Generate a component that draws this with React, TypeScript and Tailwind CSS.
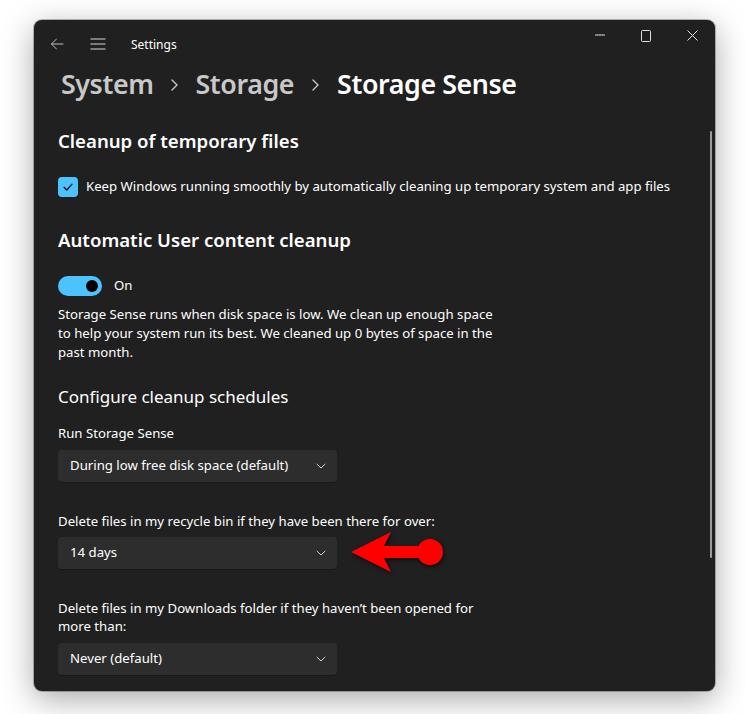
import React from "react";

function Chevron() {
  return (
    <svg width="12" height="12" viewBox="0 0 12 12" fill="none">
      <path d="M2 4.2 L6 8 L10 4.2" stroke="#d0d0d0" strokeWidth="1" strokeLinecap="round" strokeLinejoin="round" />
    </svg>
  );
}

function Dropdown({ label }: { label: string }) {
  return (
    <div className="flex h-[32px] w-[279px] items-center justify-between rounded-[4px] bg-[#2d2d2d] pl-[12px] pr-[10px] shadow-[0_1px_0_rgba(0,0,0,0.25)]">
      <span className="text-[13.2px] text-white">{label}</span>
      <Chevron />
    </div>
  );
}

export default function App() {
  return (
    <div
      className="h-[714px] w-[745px] overflow-hidden bg-white pl-[34px] pt-[20px]"
      style={{ fontFamily: '"Noto Sans", "Open Sans", sans-serif' }}
    >
      <div className="relative flex h-[671px] w-[681px] flex-col overflow-hidden rounded-[8px] bg-[#202020] shadow-[0_8px_32px_rgba(0,0,0,0.35),0_0_0_1px_rgba(0,0,0,0.25)]">
        {/* Title bar */}
        <div className="flex h-[44px] items-start justify-between">
          <div className="flex h-[48px] items-center pl-[16px]">
            <svg width="14" height="14" viewBox="0 0 14 14" fill="none">
              <path d="M13 7 H1.5 M6.5 2 L1.5 7 L6.5 12" stroke="#bdbdbd" strokeWidth="1" strokeLinecap="round" strokeLinejoin="round" />
            </svg>
            <svg className="ml-[26px]" width="16" height="12" viewBox="0 0 16 12" fill="none">
              <path d="M0.5 1 H15.5 M0.5 6 H15.5 M0.5 11 H15.5" stroke="#d8d8d8" strokeWidth="1" />
            </svg>
            <span className="ml-[25px] pt-[2px] text-[12px] text-white">Settings</span>
          </div>
          <div className="flex">
            <div className="flex h-[30px] w-[46px] items-center justify-center">
              <svg width="10" height="10" viewBox="0 0 10 10"><path d="M0 5 H10" stroke="#e0e0e0" strokeWidth="1" /></svg>
            </div>
            <div className="flex h-[32px] w-[46px] items-center justify-center">
              <svg width="10" height="12" viewBox="0 0 10 12" fill="none"><rect x="0.5" y="0.5" width="9" height="11" rx="1" stroke="#e0e0e0" strokeWidth="1" /></svg>
            </div>
            <div className="flex h-[30px] w-[46px] items-center justify-center">
              <svg width="11" height="11" viewBox="0 0 11 11"><path d="M0.5 0.5 L10.5 10.5 M10.5 0.5 L0.5 10.5" stroke="#e0e0e0" strokeWidth="1" /></svg>
            </div>
          </div>
        </div>

        {/* Breadcrumb */}
        <div className="flex h-[40px] items-center pl-[27px] text-[26.8px] font-semibold leading-none tracking-[-0.4px]">
          <span className="text-[#c8c8c8]">System</span>
          <svg className="ml-[16px] mr-[17px] mt-[2px]" width="9" height="14" viewBox="0 0 9 14" fill="none">
            <path d="M2 2 L7 7 L2 12" stroke="#c8c8c8" strokeWidth="1.4" strokeLinecap="round" strokeLinejoin="round" />
          </svg>
          <span className="text-[#c8c8c8]">Storage</span>
          <svg className="ml-[17px] mr-[17px] mt-[2px]" width="9" height="14" viewBox="0 0 9 14" fill="none">
            <path d="M2 2 L7 7 L2 12" stroke="#c8c8c8" strokeWidth="1.4" strokeLinecap="round" strokeLinejoin="round" />
          </svg>
          <span className="text-white">Storage Sense</span>
        </div>

        {/* Content */}
        <div className="relative flex-1 pl-[24px] text-white">
          <div className="mt-[23px] h-[28px] text-[18.6px] font-semibold leading-[28px]">Cleanup of temporary files</div>

          <div className="mt-[22px] flex h-[20px] items-center">
            <div className="flex h-[20px] w-[20px] items-center justify-center rounded-[4px] bg-[#4cc2ff]">
              <svg width="12" height="12" viewBox="0 0 12 12" fill="none">
                <path d="M2 6.3 L4.8 9 L10 3.2" stroke="#000" strokeWidth="1.2" strokeLinecap="round" strokeLinejoin="round" />
              </svg>
            </div>
            <span className="ml-[8px] text-[13.2px]">Keep Windows running smoothly by automatically cleaning up temporary system and app files</span>
          </div>

          <div className="mt-[29px] h-[28px] text-[18.6px] font-semibold leading-[28px]">Automatic User content cleanup</div>

          <div className="mt-[22px] flex h-[20px] items-center">
            <div className="flex h-[20px] w-[44px] items-center justify-end rounded-full bg-[#4cc2ff] pr-[4px]">
              <div className="h-[12px] w-[12px] rounded-full bg-black" />
            </div>
            <span className="ml-[12px] text-[13.2px]">On</span>
          </div>

          <p className="mt-[9px] w-[440px] text-[13.2px] leading-[19px]">
            Storage Sense runs when disk space is low. We clean up enough space to help your system run its best. We cleaned up 0 bytes of space in the past month.
          </p>

          <div className="mt-[22px] h-[26px] text-[17px] leading-[26px]">Configure cleanup schedules</div>

          <div className="mt-[13px] h-[20px] text-[13.2px] leading-[20px]">Run Storage Sense</div>
          <div className="mt-[7px]">
            <Dropdown label="During low free disk space (default)" />
          </div>

          <div className="mt-[29px] h-[20px] text-[13.2px] leading-[20px]">Delete files in my recycle bin if they have been there for over:</div>
          <div className="mt-[6px]">
            <Dropdown label="14 days" />
          </div>

          <div className="mt-[30px] w-[425px] text-[13.2px] leading-[18px]">
            Delete files in my Downloads folder if they haven’t been opened for more than:
          </div>
          <div className="mt-[8px]">
            <Dropdown label="Never (default)" />
          </div>

          {/* scrollbar */}
          <div className="absolute right-[3px] top-[27px] h-[427px] w-[2px] rounded-full bg-[#9b9b9b]" />

          {/* annotation arrow */}
          <svg className="absolute left-[313px] top-[424px]" width="100" height="50" viewBox="0 0 100 50" style={{ filter: "drop-shadow(1px 2px 2px rgba(0,0,0,0.6))" }}>
            <path d="M4 24 L44 4 L37 18 L76 18 L76 30 L37 30 L44 44 Z" fill="#ff0000" />
            <circle cx="83" cy="24" r="13" fill="#ff0000" />
          </svg>
        </div>
      </div>
    </div>
  );
}
